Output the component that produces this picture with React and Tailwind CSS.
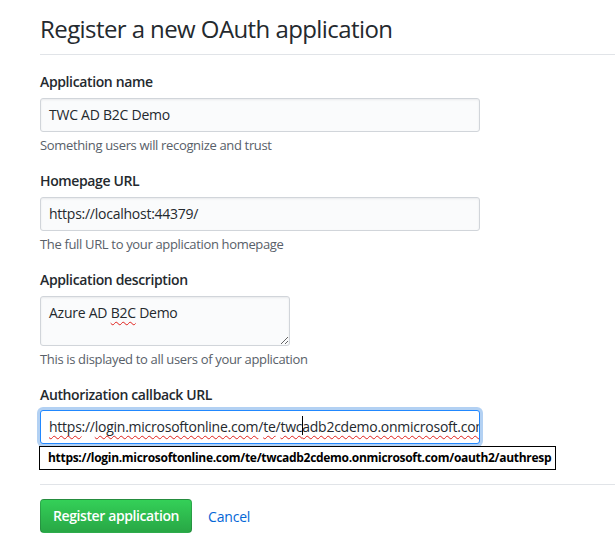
import React from 'react';

// --- Helpers ---
const Squiggle = ({ children }) => (
  <span className="underline decoration-wavy decoration-[#e0201b] decoration-1 underline-offset-[3px]">
    {children}
  </span>
);

const Label = ({ children }) => (
  <div className="text-[14px] leading-[20px] font-semibold tracking-[-0.37px] text-[#24292e]">{children}</div>
);

const Note = ({ children }) => (
  <p className="mt-[4px] text-[13px] leading-[18px] tracking-[-0.34px] text-[#586069]">{children}</p>
);

const TextField = ({ value }) => (
  <div className="mt-[6px] h-[34px] w-[440px] rounded-[3px] border border-[#d1d5da] bg-[#fafbfc] px-[8px] text-[14px] leading-[32px] tracking-[-0.25px] text-[#24292e] shadow-[inset_0_1px_2px_rgba(27,31,35,0.075)]">
    {value}
  </div>
);

const CALLBACK = 'https://login.microsoftonline.com/te/twcadb2cdemo.onmicrosoft.com/oauth2/authresp';

// --- Main Component ---
export default function App() {
  return (
    <div className="min-h-screen bg-white pl-10 font-['Open_Sans',sans-serif] text-[#24292e]">
      <div className="border-b border-[#e1e4e8] pt-[11px] pb-[7px]">
        <h2 className="text-[24px] leading-[36px] font-normal tracking-[-0.58px]">Register a new OAuth application</h2>
      </div>

      <form className="pt-[17px]">
        <div className="mb-[17px]">
          <Label>Application name</Label>
          <TextField value="TWC AD B2C Demo" />
          <Note>Something users will recognize and trust</Note>
        </div>

        <div className="mb-[17px]">
          <Label>Homepage URL</Label>
          <TextField value="https://localhost:44379/" />
          <Note>The full URL to your application homepage</Note>
        </div>

        <div className="mb-[17px]">
          <Label>Application description</Label>
          <div className="mt-[6px] h-[50px] w-[250px] resize overflow-hidden rounded-[3px] border border-[#d1d5da] bg-[#fafbfc] px-[8px] py-[6px] text-[14px] leading-[20px] tracking-[-0.25px] text-[#24292e] shadow-[inset_0_1px_2px_rgba(27,31,35,0.075)]">
            Azure AD <Squiggle>B2C</Squiggle> Demo
          </div>
          <Note>This is displayed to all users of your application</Note>
        </div>

        <div>
          <Label>Authorization callback URL</Label>
          <div className="relative mt-[5px] w-[440px]">
            <div className="h-[34px] overflow-hidden whitespace-nowrap rounded-[3px] border border-[#2188ff] bg-white px-[8px] text-[14px] leading-[32px] tracking-[-0.25px] text-[#24292e] shadow-[0_0_0_3px_rgba(3,102,214,0.3)]">
              <Squiggle>https</Squiggle>://<Squiggle>login.microsoftonline.com</Squiggle>/<Squiggle>te</Squiggle>/
              <Squiggle>
                twc
                <span className="relative">
                  <span className="absolute left-0 top-[-1px] h-[19px] w-px bg-black" />
                </span>
                adb2cdemo.onmicrosoft.com/oauth2/authresp
              </Squiggle>
            </div>
            <div className="absolute left-[-1px] top-[36px] z-10 h-[24px] w-[517px] border border-black bg-white px-[8px] text-[12px] leading-[22px] font-bold tracking-[-0.3px] whitespace-nowrap text-black">
              {CALLBACK}
            </div>
          </div>
        </div>

        <div className="mt-[40px] border-t border-[#e1e4e8] pt-[14px]">
          <div className="flex items-center">
            <button
              type="button"
              className="h-[34px] rounded-[4px] border border-[rgba(27,31,35,0.2)] bg-gradient-to-b from-[#34d058] to-[#28a745] px-[12px] text-[14px] leading-[20px] font-semibold tracking-[-0.4px] text-white"
            >
              Register application
            </button>
            <a href="#" className="ml-[16px] text-[14px] tracking-[-0.2px] text-[#0366d6]">
              Cancel
            </a>
          </div>
        </div>
      </form>
    </div>
  );
}
